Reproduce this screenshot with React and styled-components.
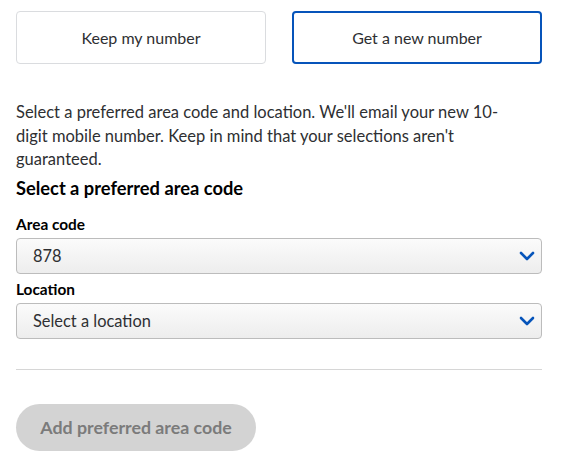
import React from "react";
import styled, { createGlobalStyle } from "styled-components";

const GlobalStyle = createGlobalStyle`
  body {
    margin: 0;
    background: #fff;
    font-family: Lato, "Open Sans", sans-serif;
    color: #2e2f32;
  }
`;

const Page = styled.div`
  width: 526px;
  padding: 11px 0 0 16px;
`;

const Tabs = styled.div`
  display: grid;
  grid-template-columns: 1fr 1fr;
  gap: 26px;
`;

const Tab = styled.button`
  height: 53px;
  background: #fff;
  border: ${(p) => (p.active ? "2px solid #0654ba" : "1px solid #dadcdf")};
  border-radius: 4px;
  font-family: inherit;
  font-size: 16px;
  color: #2e2f32;
  cursor: pointer;
`;

const Intro = styled.p`
  max-width: 487px;
  margin: 37px 0 0;
  font-size: 16.5px;
  line-height: 23.5px;
`;

const Heading = styled.h3`
  margin: 5px 0 0;
  font-size: 18.3px;
  line-height: 22px;
  font-weight: 700;
  color: #000;
`;

const Label = styled.label`
  display: block;
  margin: ${(p) => (p.first ? "16px" : "6px")} 0 5px;
  font-size: 15.4px;
  line-height: 18px;
  font-weight: 700;
  color: #000;
`;

const SelectBox = styled.div`
  display: flex;
  align-items: center;
  justify-content: space-between;
  height: 36px;
  box-sizing: border-box;
  padding: 0 6px 0 16px;
  border: 1px solid #bcbcbc;
  border-radius: 4px;
  background: linear-gradient(#fbfbfb, #ededed);
  font-size: 16.4px;
  color: #2e2f32;
`;

const Divider = styled.hr`
  margin: 30px 0 0;
  border: 0;
  border-top: 1px solid #d6d6d6;
`;

const AddButton = styled.button`
  margin-top: 34px;
  width: 240px;
  height: 47px;
  padding: 0;
  border: 0;
  border-radius: 24px;
  background: #d3d3d3;
  color: #7b7b7b;
  font-family: inherit;
  font-size: 17.8px;
  font-weight: 700;
`;

const Chevron = () => (
  <svg width="16" height="10" viewBox="0 0 16 10">
    <path d="M2 2l6 6 6-6" fill="none" stroke="#0654ba" strokeWidth="2.6" strokeLinecap="round" strokeLinejoin="round" />
  </svg>
);

const Select = ({ value }) => (
  <SelectBox>
    <span>{value}</span>
    <Chevron />
  </SelectBox>
);

export default function App() {
  return (
    <Page>
      <GlobalStyle />
      <Tabs>
        <Tab>Keep my number</Tab>
        <Tab active>Get a new number</Tab>
      </Tabs>
      <Intro>
        Select a preferred area code and location. We'll email your new 10-digit mobile number. Keep in mind that your selections aren't guaranteed.
      </Intro>
      <Heading>Select a preferred area code</Heading>
      <Label first>Area code</Label>
      <Select value="878" />
      <Label>Location</Label>
      <Select value="Select a location" />
      <Divider />
      <AddButton disabled>Add preferred area code</AddButton>
    </Page>
  );
}
